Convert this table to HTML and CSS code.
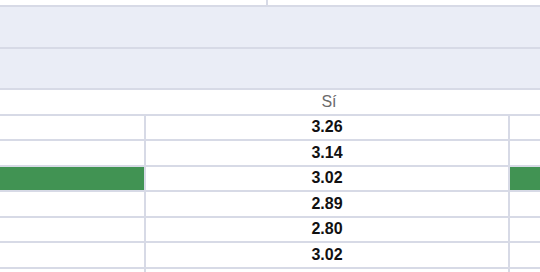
FILE: index.html
```html
<!DOCTYPE html>
<html lang="es">
<head>
<meta charset="utf-8">
<link rel="stylesheet" href="styles.css">
</head>
<body>
<div class="sheet">
  <div class="top-row">
    <div class="top-cell"></div>
    <div class="top-cell"></div>
  </div>
  <div class="band"></div>
  <div class="band"></div>
  <div class="label-row"><div></div><div class="label">Sí</div><div></div></div>
  <div class="row"><div class="cell"></div><div class="cell val">3.26</div><div class="cell"></div></div>
  <div class="row"><div class="cell"></div><div class="cell val">3.14</div><div class="cell"></div></div>
  <div class="row"><div class="cell hl"></div><div class="cell val">3.02</div><div class="cell hl"></div></div>
  <div class="row"><div class="cell"></div><div class="cell val">2.89</div><div class="cell"></div></div>
  <div class="row"><div class="cell"></div><div class="cell val">2.80</div><div class="cell"></div></div>
  <div class="row"><div class="cell"></div><div class="cell val">3.02</div><div class="cell"></div></div>
  <div class="row"><div class="cell"></div><div class="cell val"></div><div class="cell"></div></div>
</div>
</body>
</html>
```

FILE: styles.css
```css
html, body {
  margin: 0;
  padding: 0;
  background: #ffffff;
  overflow: hidden;
}
.sheet {
  width: 540px;
  height: 272px;
  overflow: hidden;
  font-family: "Liberation Sans", Arial, sans-serif;
  font-size: 16px;
}
.top-row {
  display: grid;
  grid-template-columns: 268px 1fr;
  height: 5px;
  border-bottom: 2px solid #d7dae6;
}
.top-cell:first-child {
  border-right: 2px solid #d7dae6;
}
.band {
  height: 39.5px;
  background: #eaedf6;
  border-bottom: 2px solid #d7dae6;
}
.label-row {
  display: grid;
  grid-template-columns: 146px 364px 1fr;
  height: 25.5px;
  box-sizing: border-box;
  border-bottom: 2px solid #d7dae6;
}
.label {
  display: flex;
  align-items: center;
  justify-content: center;
  padding-top: 1px;
  padding-left: 2px;
  color: #6b6b6b;
}
.row {
  display: grid;
  grid-template-columns: 146px 364px 1fr;
  height: 25.5px;
  box-sizing: border-box;
  border-bottom: 2px solid #d7dae6;
}
.cell {
  border-right: 2px solid #d7dae6;
}
.cell:last-child {
  border-right: none;
}
.cell.val {
  display: flex;
  align-items: center;
  justify-content: center;
  font-weight: bold;
  color: #111111;
}
.cell.hl {
  background: #419353;
}
```
